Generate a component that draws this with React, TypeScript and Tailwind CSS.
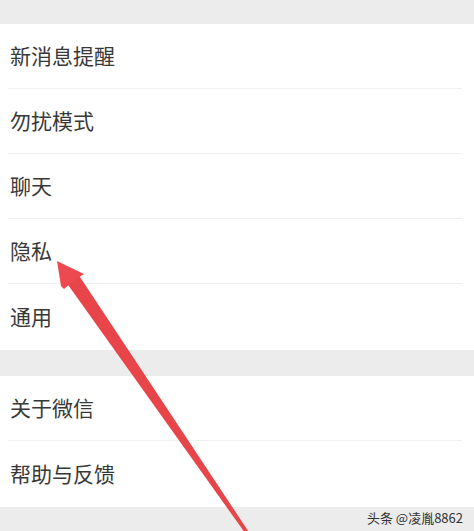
import React from 'react';

const groups: { label: string; h: string }[][] = [
  [
    { label: '新消息提醒', h: 'h-[65px]' },
    { label: '勿扰模式', h: 'h-[65px]' },
    { label: '聊天', h: 'h-[65px]' },
    { label: '隐私', h: 'h-[65px]' },
    { label: '通用', h: 'h-[66px]' },
  ],
  [
    { label: '关于微信', h: 'h-[65px]' },
    { label: '帮助与反馈', h: 'h-[66px]' },
  ],
];

const Arrow: React.FC = () => (
  <svg className="absolute inset-0 pointer-events-none" width="474" height="531" viewBox="0 0 474 531">
    {/* tapered shaft */}
    <polygon points="78,274 66,282 246.5,535 249.5,533" fill="#e8454b" />
    {/* head */}
    <polygon points="57,261 84,274 75,280 64,289 61,286" fill="#ec4a50" />
  </svg>
);

export default function App() {
  return (
    <div className="relative w-[474px] h-[531px] overflow-hidden bg-[#ececec] pt-[24px] font-['Noto_Sans_CJK_SC','Noto_Sans',sans-serif]">
      {groups.map((rows, gi) => (
        <div key={gi} className={`bg-white ${gi > 0 ? 'mt-[26px]' : ''}`}>
          {rows.map((r, i) => (
            <div key={r.label} className={`${r.h} flex flex-col`}>
              <div className="flex-1 flex items-center pl-[10px] text-[21px] text-[#383838]">{r.label}</div>
              {i < rows.length - 1 && <div className="ml-[8px] mr-[12px] h-px bg-[#efefef]" />}
            </div>
          ))}
        </div>
      ))}
      <Arrow />
      <div className="absolute right-[11px] bottom-[7px] text-[13px] leading-none text-[#333]">头条 @凌胤8862</div>
    </div>
  );
}
